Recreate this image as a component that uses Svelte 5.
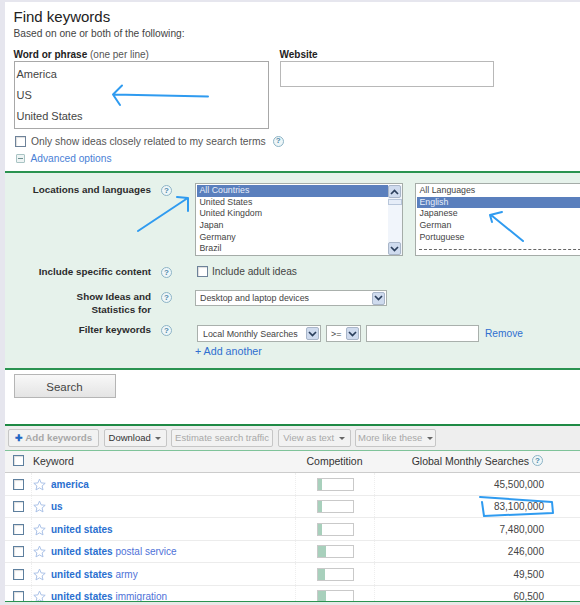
<script>
  const countries = ['All Countries', 'United States', 'United Kingdom', 'Japan', 'Germany', 'Brazil'];
  const languages = ['All Languages', 'English', 'Japanese', 'German', 'Portuguese'];
  const tools = [
    { label: 'Add keywords', off: true, plus: true, strong: true, w: 91 },
    { label: 'Download', caret: true, w: 63 },
    { label: 'Estimate search traffic', off: true, w: 102 },
    { label: 'View as text', off: true, caret: true, w: 73 },
    { label: 'More like these', off: true, caret: true, w: 81 }
  ];
  const rows = [
    { bold: 'america', rest: '', comp: 4, total: '45,500,000' },
    { bold: 'us', rest: '', comp: 4, total: '83,100,000' },
    { bold: 'united states', rest: '', comp: 4, total: '7,480,000' },
    { bold: 'united states', rest: ' postal service', comp: 8, total: '246,000' },
    { bold: 'united states', rest: ' army', comp: 7, total: '49,500' },
    { bold: 'united states', rest: ' immigration', comp: 8, total: '60,500' }
  ];
</script>

{#snippet help()}
  <span class="help">?</span>
{/snippet}

{#snippet arrowBtn()}
  <span class="drop"><svg width="9" height="6" viewBox="0 0 9 6"><path d="M1 1l3.5 3.5L8 1" fill="none" stroke="#2b3f5c" stroke-width="1.7"/></svg></span>
{/snippet}

<div class="page">
  <div class="card">
    <section class="top">
      <h1>Find keywords</h1>
      <p class="sub">Based on one or both of the following:</p>
      <div class="inputs">
        <div>
          <div class="lbl"><b>Word or phrase</b> (one per line)</div>
          <div class="area">
            <div>America</div>
            <div>US</div>
            <div>United States</div>
          </div>
        </div>
        <div>
          <div class="lbl"><b>Website</b></div>
          <div class="site"></div>
        </div>
      </div>
      <div class="only">
        <span class="check"></span>
        <span>Only show ideas closely related to my search terms</span>
        {@render help()}
      </div>
      <div class="adv">
        <span class="minus"></span>
        <span>Advanced options</span>
      </div>
    </section>

    <section class="panel">
      <div class="row r1">
        <div class="name">Locations and languages</div>
        {@render help()}
        <div class="lists">
          <div class="list countries">
            <div class="opts">
              {#each countries as c, i}
                <div class="opt" class:sel={i === 0}>{c}</div>
              {/each}
            </div>
            <div class="scroll">
              <span class="sbtn"><svg width="9" height="6" viewBox="0 0 9 6"><path d="M1 5l3.5-3.5L8 5" fill="none" stroke="#2b3f5c" stroke-width="1.7"/></svg></span>
              <span class="thumb"></span>
              <span class="sbtn end"><svg width="9" height="6" viewBox="0 0 9 6"><path d="M1 1l3.5 3.5L8 1" fill="none" stroke="#2b3f5c" stroke-width="1.7"/></svg></span>
            </div>
          </div>
          <div class="list langs">
            {#each languages as l, i}
              <div class="opt" class:sel={i === 1}>{l}</div>
            {/each}
            <div class="dash"></div>
          </div>
        </div>
      </div>
      <div class="row r2">
        <div class="name">Include specific content</div>
        {@render help()}
        <div class="adult"><span class="check"></span><span>Include adult ideas</span></div>
      </div>
      <div class="row r3">
        <div class="name">Show Ideas and<br />Statistics for</div>
        {@render help()}
        <div class="select devices"><span>Desktop and laptop devices</span>{@render arrowBtn()}</div>
      </div>
      <div class="row r4">
        <div class="name">Filter keywords</div>
        {@render help()}
        <div>
          <div class="filter">
            <div class="select local"><span>Local Monthly Searches</span>{@render arrowBtn()}</div>
            <div class="select gte"><span>&gt;=</span>{@render arrowBtn()}</div>
            <div class="amount"></div>
            <span class="link remove">Remove</span>
          </div>
          <div class="link another">+ Add another</div>
        </div>
      </div>
    </section>

    <div class="actions"><button>Search</button></div>

    <section class="results">
      <div class="tools">
        {#each tools as t}
          <span class="tool" class:off={t.off} class:strong={t.strong} style="width: {t.w}px">
            {#if t.plus}<span class="plus">✚</span>{/if}
            {t.label}
            {#if t.caret}<span class="caret"></span>{/if}
          </span>
        {/each}
      </div>
      <div class="thead">
        <div class="c0"><span class="check big"></span></div>
        <div class="c1 kw">Keyword</div>
        <div class="c2 center">Competition</div>
        <div class="c3 head-total">Global Monthly Searches {@render help()}</div>
      </div>
      <div class="tbody">
        {#each rows as r}
          <div class="tr">
            <div class="c0"><span class="check big"></span></div>
            <div class="c1 word">
              <svg class="star" width="13" height="13" viewBox="0 0 24 24"><path d="M12 2l3 7 7.500.7-5.700 5 1.700 7.300L12 18.200 5.500 22l1.700-7.300-5.700-5L9 9z" fill="#fff" stroke="#a9c0e6" stroke-width="1.800"/></svg>
              <span class="link"><b>{r.bold}</b>{r.rest}</span>
            </div>
            <div class="c2 center"><span class="bar"><i style="width: {r.comp}px"></i></span></div>
            <div class="c3 total">{r.total}</div>
          </div>
        {/each}
      </div>
    </section>
    <div class="foot"></div>
  </div>

  <svg class="marks" width="580" height="605" viewBox="0 0 580 605">
    <g fill="none" stroke="#2f9bf0" stroke-width="2" stroke-linecap="round" stroke-linejoin="round">
      <path d="M208 96.500L114 94.500M122 85.500L113 94.500L120 105" />
      <path d="M138 231L187 198.500M177 197L188 198L188 211" />
      <path d="M523 241L491 215M502 212L490 215L492 222" />
      <path d="M480 497L552 502L553 513L484 516L482 502" />
    </g>
  </svg>
</div>

<style>
  :global(body) { background: #fff; }
  .page {
    position: relative;
    width: 580px;
    height: 605px;
    overflow: hidden;
    background: #e6e6ee;
    padding: 2px 0 0 5px;
    box-sizing: border-box;
    font-family: "Liberation Sans", Arial, sans-serif;
    color: #333;
  }
  .card { background: #fff; height: 603px; overflow: hidden; }
  .marks { position: absolute; left: 0; top: 0; pointer-events: none; }

  .top { padding: 6px 0 0 8.500px; height: 169px; box-sizing: border-box; }
  h1 { margin: 0; font-size: 15px; line-height: 17px; font-weight: normal; color: #222; }
  .sub { margin: 2px 0 0; font-size: 10.200px; line-height: 13px; color: #444; }
  .inputs { display: flex; gap: 11px; margin-top: 8px; }
  .lbl { font-size: 10px; line-height: 13px; color: #555; }
  .lbl b { color: #222; }
  .area {
    width: 255px; height: 68px; box-sizing: border-box; border: 1px solid #a8a8a8;
    padding: 2px 2px; font-size: 11px; line-height: 21px; color: #444;
  }
  .site { width: 214px; height: 26px; box-sizing: border-box; border: 1px solid #b8b8b8; }
  .only { display: flex; align-items: center; gap: 5px; margin: 5px 0 0 1.500px; font-size: 10.300px; color: #555; height: 14px; }
  .only .help { margin-left: 2px; }
  .adv { display: flex; align-items: center; gap: 6px; margin: 3px 0 0 2px; font-size: 10.200px; color: #4a7fd6; height: 14px; }
  .minus {
    width: 7px; height: 7px; border: 1px solid #a9c4c4; border-radius: 1px; position: relative; background: #eef4f4;
  }
  .minus::after { content: ''; position: absolute; left: 1px; right: 1px; top: 3px; height: 1px; background: #6d9090; }

  .check {
    display: inline-block; flex: none; width: 9px; height: 9px;
    border: 1px solid #6d8299; background: #fff; box-shadow: inset 1px 1px 1px #ddd;
  }
  .check.big { width: 9px; height: 9px; border: 1.500px solid #5d7f9e; }
  .help {
    display: inline-flex; align-items: center; justify-content: center; flex: none;
    width: 9px; height: 9px; border: 1px solid #8db4c6; border-radius: 50%;
    background: #eef6f8; color: #4f8aa8; font-size: 8px; font-weight: bold; line-height: 1;
  }

  .panel {
    background: #e6f2eb;
    border-top: 2px solid #2a9350;
    border-bottom: 2px solid #2a9350;
    height: 199px;
    box-sizing: border-box;
    padding-top: 10px;
  }
  .row { display: grid; grid-template-columns: 146px 44px 1fr; }
  .row > .help { margin: 2px 0 0 10px; justify-self: start; }
  .name { text-align: right; font-size: 9.850px; line-height: 12.500px; font-weight: bold; color: #2b2b2b; padding-top: 1px; }
  .r1 { height: 82px; }
  .r2 { height: 25px; }
  .r3 { height: 33px; }
  .lists { display: flex; gap: 12px; }
  .list {
    height: 73px; box-sizing: border-box; border: 1px solid #a5aca8; background: #fff;
    font-size: 8.800px; line-height: 11.700px; color: #444; overflow: hidden; padding: 1px;
  }
  .countries { width: 208px; display: flex; padding: 1px 0 0 1px; }
  .opts { flex: 1; }
  .langs { width: 180px; flex: none; }
  .opt { padding-left: 2.500px; height: 11.700px; }
  .opt.sel { background: #5a7fbd; color: #e8eefa; }
  .dash { border-top: 1px dashed #666; margin: 6px 2px 0; }
  .scroll {
    width: 14px; height: 70px; display: flex; flex-direction: column; background: #f1f5fb; position: relative;
  }
  .sbtn {
    display: flex; align-items: center; justify-content: center; width: 13px; height: 13px;
    background: #cfdbee; border: 1px solid #a9b6c9; box-sizing: border-box; border-radius: 2px;
  }
  .sbtn.end { margin-top: auto; }
  .thumb { height: 6px; margin: 1px 0; border: 1px solid #b8c6da; background: #e6edf8; box-sizing: border-box; }
  .adult { display: flex; align-items: center; gap: 4px; font-size: 10.200px; color: #444; margin-left: 2px; height: 13px; }
  .select {
    display: flex; align-items: center; justify-content: space-between; box-sizing: border-box;
    background: #fff; border: 1px solid #a9b0ac; font-size: 8.900px; color: #444; padding: 0 1px 0 4px;
  }
  .devices { width: 192px; height: 16px; }
  .drop {
    display: flex; align-items: center; justify-content: center; width: 13px; height: 13px; flex: none;
    background: #cfdbee; border: 1px solid #a9b6c9; box-sizing: border-box; border-radius: 2px;
  }
  .filter { display: flex; align-items: center; margin: 2px 0 0 2px; height: 17px; }
  .local { width: 124px; height: 17px; padding-left: 5px; }
  .gte { width: 35px; height: 17px; margin-left: 5px; }
  .amount { width: 113px; height: 17px; box-sizing: border-box; border: 1px solid #a9b0ac; background: #fff; margin-left: 5px; }
  .link { color: #2f6fd0; }
  .remove { font-size: 10.200px; margin-left: 6px; }
  .another { font-size: 10.700px; margin-top: 3px; line-height: 13px; }

  .actions { height: 54px; padding: 4px 0 0 8.500px; box-sizing: border-box; }
  button {
    display: block; width: 102px; height: 24px; padding: 1px 0 0;
    font-family: inherit; font-size: 11.500px; color: #444;
    background: linear-gradient(#f8f8f8, #e4e4e4); border: 1px solid #b5b5b5;
  }

  .results { border-top: 2px solid #1f8a45; }
  .tools { display: flex; gap: 4.500px; height: 25px; padding: 3px 0 0 3px; box-sizing: border-box; background: #eee; border-bottom: 1px solid #7fc39a; }
  .tool {
    height: 18px; box-sizing: border-box; border: 1px solid #c6c6c6; border-radius: 2px; background: #f2f2f2;
    font-size: 9.500px; line-height: 16px; color: #333; text-align: center; white-space: nowrap; overflow: hidden;
  }
  .tool.off { color: #a8a8a8; }
  .tool.strong { font-weight: bold; font-size: 9.800px; }
  .plus { color: #2266c4; font-size: 9px; }
  .caret {
    display: inline-block; width: 0; height: 0; margin: 0 0 1px 2px;
    border: 3px solid transparent; border-top: 3px solid #666; border-bottom: 0;
  }
  .thead, .tr { display: grid; grid-template-columns: 26px 264px 79px 174px 32px; }
  .thead { height: 22px; padding-bottom: 2px; background: #f5f5f5; border-bottom: 1px solid #ccc; box-sizing: border-box; align-items: center; font-size: 10.500px; color: #333; }
  .kw { padding-left: 2px; }
  .center { text-align: center; }
  .head-total { display: flex; align-items: center; justify-content: flex-end; gap: 3px; padding-right: 5px; white-space: nowrap; }
  .c0 { display: flex; align-items: center; justify-content: center; }
  .tr { height: 22.500px; box-sizing: border-box; border-bottom: 1px solid #ececec; font-size: 10px; color: #444; }
  .tr > div { display: flex; align-items: center; border-left: 1px dotted #eee; padding-top: 1px; }
  .tr > .c0 { border-left: 0; }
  .word { padding-left: 1px; gap: 5px; }
  .star { flex: none; }
  .word .link { color: #4f72d8; white-space: nowrap; }
  .word b { color: #2a6fd0; }
  .tr > .center { justify-content: center; }
  .bar { display: block; width: 37px; height: 13px; box-sizing: border-box; border: 1px solid #c9c9c9; background: #fff; }
  .bar i { display: block; height: 100%; background: #a8d0bc; }
  .total { justify-content: flex-end; padding-right: 4px; }
  .foot { position: absolute; left: 5px; right: 0; top: 601px; height: 4px; background: #e8e8e8; border-top: 1px solid #2a9350; box-sizing: border-box; }
</style>
